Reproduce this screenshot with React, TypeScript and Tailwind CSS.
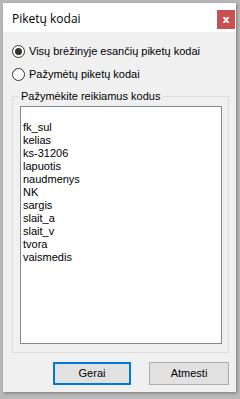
import React from "react";

const items = ["", "fk_sul", "kelias", "ks-31206", "lapuotis", "naudmenys", "NK", "sargis", "slait_a", "slait_v", "tvora", "vaismedis"];

function Radio({ checked, label }: { checked: boolean; label: string }) {
  return (
    <div className="flex items-center h-[14px]">
      <div className="w-[13px] h-[13px] rounded-full border border-[#333333] bg-white flex items-center justify-center">
        {checked && <div className="w-[7px] h-[7px] rounded-full bg-[#333333]" />}
      </div>
      <span className="ml-[4px] text-[11px] leading-[14px] text-black">{label}</span>
    </div>
  );
}

export default function App() {
  return (
    <div
      className="w-[240px] h-[399px] bg-[#b8b8b8] pt-[3px] pl-[3px] overflow-hidden"
      style={{ fontFamily: '"Liberation Sans", Arial, sans-serif' }}
    >
      <div className="w-[233px] h-[389px] flex flex-col bg-[#f0f0f0] shadow-[1px_1px_3px_rgba(0,0,0,0.35)]">
        {/* Title bar */}
        <div className="h-[29px] bg-white flex items-start relative shrink-0">
          <span
            className="ml-[9px] mt-[9px] text-[12px] leading-[14px] text-black"
            style={{ fontFamily: '"Open Sans", "Noto Sans", sans-serif' }}
          >
            Piketų kodai
          </span>
          <div className="absolute right-[1px] top-[7px] w-[18px] h-[19px] bg-[#c75050] flex items-center justify-center">
            <span className="text-white text-[11px] font-bold leading-none" style={{ fontFamily: '"DejaVu Sans", sans-serif' }}>x</span>
          </div>
        </div>
        {/* Body */}
        <div className="flex flex-col pl-[9px] pr-[7px]">
          <div className="mt-[12px] flex flex-col gap-[9px]">
            <Radio checked={true} label="Visų brėžinyje esančių piketų kodai" />
            <Radio checked={false} label="Pažymėtų piketų kodai" />
          </div>
          {/* Group box */}
          <div className="relative mt-[15px] w-[217px] h-[257px] border border-[#dcdcdc] pt-[9px] pl-[7px]">
            <span className="absolute left-[6px] top-[-8px] px-[2px] bg-[#f0f0f0] text-[11px] leading-[14px] text-black">
              Pažymėkite reikiamus kodus
            </span>
            <div className="w-[202px] h-[238px] border border-[#828790] bg-white pt-[1px] pl-[2px]">
              {items.map((it, i) => (
                <div key={i} className="h-[13px] text-[11px] leading-[13px] text-black whitespace-nowrap">
                  {it}
                </div>
              ))}
            </div>
          </div>
          {/* Buttons */}
          <div className="flex mt-[9px] ml-[41px] gap-[18px]">
            <div className="w-[78px] h-[23px] border-2 border-[#0078d7] bg-[#e1e1e1] flex items-center justify-center text-[11px] text-black">
              Gerai
            </div>
            <div className="w-[80px] h-[23px] border border-[#adadad] bg-[#e1e1e1] flex items-center justify-center text-[11px] text-black">
              Atmesti
            </div>
          </div>
        </div>
      </div>
    </div>
  );
}
